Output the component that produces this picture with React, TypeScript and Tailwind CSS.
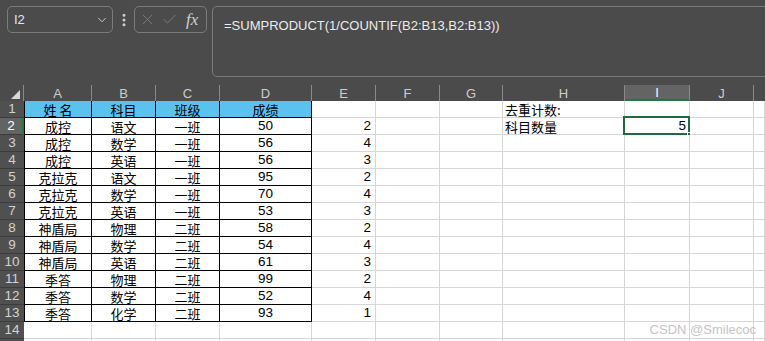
import { ChevronDown, EllipsisVertical, X, Check } from "lucide-react";

type Row = [string, string, string, string, string];

const data: Row[] = [
  ["成控", "语文", "一班", "50", "2"],
  ["成控", "数学", "一班", "56", "4"],
  ["成控", "英语", "一班", "56", "3"],
  ["克拉克", "语文", "一班", "95", "2"],
  ["克拉克", "数学", "一班", "70", "4"],
  ["克拉克", "英语", "一班", "53", "3"],
  ["神盾局", "物理", "二班", "58", "2"],
  ["神盾局", "数学", "二班", "54", "4"],
  ["神盾局", "英语", "二班", "61", "3"],
  ["季答", "物理", "二班", "99", "2"],
  ["季答", "数学", "二班", "52", "4"],
  ["季答", "化学", "二班", "93", "1"],
];

const letters = ["A", "B", "C", "D", "E", "F", "G", "H", "I", "J", ""];
const gridCols = "grid grid-cols-[24px_68px_64px_64px_92px_64px_64px_63px_122px_65px_64px_1fr]";
const cjk = "font-['Noto_Sans_CJK_SC','Liberation_Sans',sans-serif]";
const num = "font-['Liberation_Sans',Arial,sans-serif]";

function Cell({ r, c }: { r: number; c: number }) {
  const inTable = r >= 1 && r <= 13 && c <= 3;
  let text = "";
  let align = "justify-center";
  let font = cjk;
  if (r === 1 && c <= 3) text = ["姓 名", "科目", "班级", "成绩"][c];
  if (r >= 2 && r <= 13) {
    const row = data[r - 2];
    if (c <= 3) text = row[c];
    if (c === 3) font = num;
    if (c === 4) {
      text = row[4];
      align = "justify-end pr-[4px]";
      font = num;
    }
  }
  if (c === 7 && r === 1) { text = "去重计数:"; align = "justify-start pl-[2px]"; }
  if (c === 7 && r === 2) { text = "科目数量"; align = "justify-start pl-[2px]"; }
  const selected = c === 8 && r === 2;
  if (selected) { text = "5"; align = "justify-end pr-[3px]"; font = num; }

  const border = inTable
    ? `border-r border-b border-black ${c === 0 ? "border-l" : ""}`
    : "border-r border-b border-[#d6d6d6]";
  const bg = r === 1 && c <= 3 ? "bg-[#5bc2f0]" : "bg-white";
  const size = font === num ? "text-[13.5px]" : "text-[13px]";

  return (
    <div className={`relative flex items-center overflow-visible ${align} ${border} ${bg} ${font} ${size} leading-none text-black whitespace-nowrap`}>
      {text}
      {selected && (
        <>
          <div className="absolute -top-[2px] -left-[2px] -right-[1px] -bottom-[1px] border-2 border-[#1e6b41]" />
          <div className="absolute -right-[4px] -bottom-[4px] h-[6px] w-[6px] bg-[#1e6b41] border border-white" />
        </>
      )}
    </div>
  );
}

export default function App() {
  return (
    <div className="relative h-[341px] w-[765px] overflow-hidden bg-[#4b4b4b]">
      {/* formula bar */}
      <div className="flex h-[85px] items-start pl-[7px] pt-[6px]">
        <div className="flex h-[27px] w-[106px] items-center justify-between rounded-[5px] border border-[#7b7b7b] pl-[6px] pr-[3px]">
          <span className={`${num} text-[13px] text-[#e6e6e6]`}>I2</span>
          <ChevronDown className="h-[14px] w-[14px] text-[#cfcfcf]" strokeWidth={1.6} />
        </div>
        <div className="flex h-[27px] w-[21px] items-center justify-center">
          <EllipsisVertical className="h-[16px] w-[16px] text-[#d0d0d0]" strokeWidth={2.5} />
        </div>
        <div className="flex h-[27px] w-[73px] items-center rounded-[5px] border border-[#7b7b7b] pl-[4px]">
          <X className="h-[17px] w-[17px] text-[#7e7e7e]" strokeWidth={1.3} />
          <Check className="ml-[5px] h-[17px] w-[17px] text-[#7e7e7e]" strokeWidth={1.3} />
          <span className="ml-[8px] font-['Liberation_Serif',serif] text-[17px] italic leading-none text-[#d0d0d0]">fx</span>
        </div>
        <div className="ml-[5px] -mr-[6px] h-[71px] flex-1 rounded-[5px] border border-[#7b7b7b] pl-[11px] pt-[5px]">
          <span className={`${num} text-[13px] text-[#ececec]`}>=SUMPRODUCT(1/COUNTIF(B2:B13,B2:B13))</span>
        </div>
      </div>

      {/* column headers */}
      <div className={`${gridCols} h-[16px]`}>
        <div className="relative border-r border-[#8a8a8a]">
          <div className="absolute bottom-[2px] right-[3px] h-0 w-0 border-b-[9px] border-l-[9px] border-b-[#d8d8d8] border-l-transparent" />
        </div>
        {letters.map((l, i) => (
          <div
            key={i}
            className={`flex items-center justify-center ${num} text-[13px] leading-none ${
              l === "I" ? "bg-[#646464] border-b-2 border-b-[#1e7a45] text-white" : "text-[#cdcdcd]"
            } ${l ? "border-r border-r-[#8a8a8a]" : ""}`}
          >
            {l}
          </div>
        ))}
      </div>

      {/* rows */}
      {Array.from({ length: 15 }, (_, i) => i + 1).map((r) => (
        <div key={r} className={`${gridCols} h-[17px]`}>
          <div
            className={`flex items-center justify-center ${num} text-[13.5px] leading-none border-b border-[#3c3c3c] ${
              r === 2 ? "bg-[#636363] border-r-2 border-r-[#1e7a45] text-white" : "bg-[#505050] text-[#d2d2d2]"
            }`}
          >
            {r <= 14 ? r : ""}
          </div>
          {letters.map((_, c) => (
            <Cell key={c} r={r} c={c} />
          ))}
        </div>
      ))}

      <div className={`absolute bottom-[5px] right-[9px] ${num} text-[13px] leading-none text-[#c4c4c4]`}>
        CSDN @Smilecoc
      </div>
    </div>
  );
}
